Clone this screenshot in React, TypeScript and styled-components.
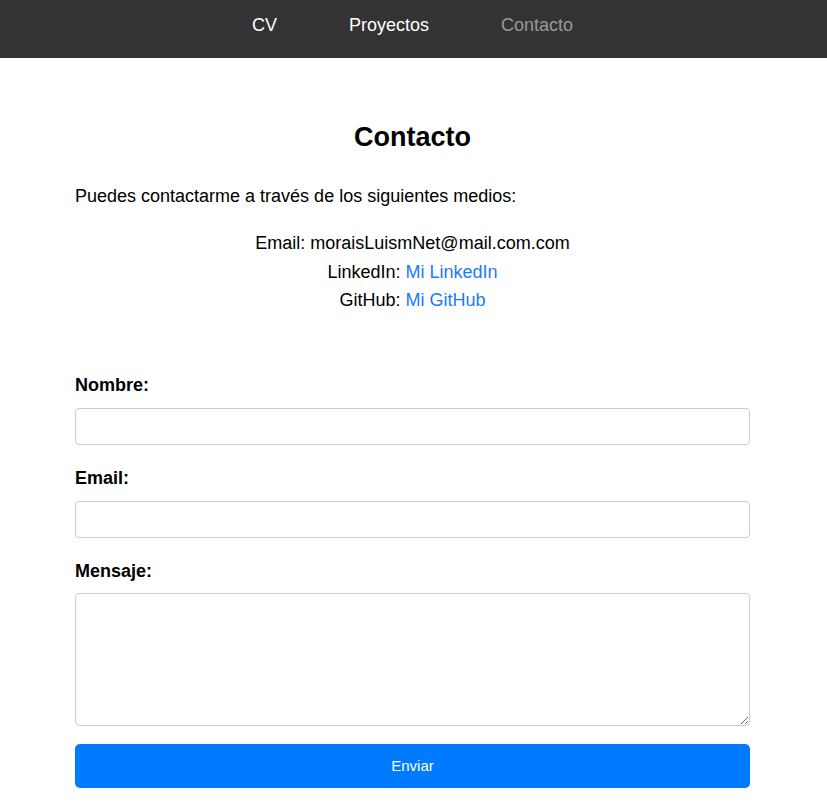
import React from "react";
import styled, { createGlobalStyle } from "styled-components";

const GlobalStyle = createGlobalStyle`
  html, body { margin: 0; padding: 0; background: #fff; }
  body { font-family: "Liberation Sans", Arial, sans-serif; color: #000; }
  * { box-sizing: border-box; }
`;

const NavBar = styled.nav`
  height: 58px;
  background: #333;
  display: flex;
  justify-content: center;
  align-items: flex-start;
  gap: 72px;
  padding: 14px 2px 0 0;
`;

const NavLink = styled.a<{ $active?: boolean }>`
  font-size: 18px;
  line-height: 22px;
  color: ${(p) => (p.$active ? "#999" : "#fff")};
  text-decoration: none;
`;

const Main = styled.main`
  max-width: 677px;
  margin: 0 auto;
  padding: 63px 2px 0 0;
`;

const Title = styled.h2`
  margin: 0;
  font-size: 27px;
  line-height: 32px;
  font-weight: bold;
  text-align: center;
`;

const Intro = styled.p`
  margin: 31px 0 0;
  font-size: 18px;
  line-height: 24px;
`;

const ContactList = styled.div`
  margin-top: 21px;
  text-align: center;
  font-size: 18px;
  line-height: 28.5px;
`;

const Link = styled.a`
  color: #1a7bff;
  text-decoration: none;
`;

const Form = styled.form`
  margin-top: 58px;
  display: flex;
  flex-direction: column;
`;

const Label = styled.label<{ $first?: boolean }>`
  display: block;
  font-size: 18px;
  line-height: 24px;
  font-weight: bold;
  margin-top: ${(p) => (p.$first ? "0" : "21px")};
  margin-bottom: 11px;
`;

const Input = styled.input`
  display: block;
  width: 100%;
  height: 37px;
  border: 1px solid #ccc;
  border-radius: 4px;
  padding: 8px;
  font-size: 16px;
  font-family: inherit;
`;

const TextArea = styled.textarea`
  display: block;
  width: 100%;
  height: 133px;
  margin-top: -1px;
  border: 1px solid #ccc;
  border-radius: 4px;
  padding: 8px;
  font-size: 16px;
  font-family: inherit;
`;

const Button = styled.button`
  margin-top: 18px;
  width: 100%;
  height: 44px;
  background: #007bff;
  color: #fff;
  border: none;
  border-radius: 5px;
  font-size: 15px;
  font-family: inherit;
  cursor: pointer;
`;

export default function App() {
  return (
    <>
      <GlobalStyle />
      <NavBar>
        <NavLink href="#">CV</NavLink>
        <NavLink href="#">Proyectos</NavLink>
        <NavLink href="#" $active>
          Contacto
        </NavLink>
      </NavBar>
      <Main>
        <Title>Contacto</Title>
        <Intro>Puedes contactarme a través de los siguientes medios:</Intro>
        <ContactList>
          <div>Email: moraisLuismNet@mail.com.com</div>
          <div>
            LinkedIn: <Link href="#">Mi LinkedIn</Link>
          </div>
          <div>
            GitHub: <Link href="#">Mi GitHub</Link>
          </div>
        </ContactList>
        <Form onSubmit={(e) => e.preventDefault()}>
          <Label $first htmlFor="nombre">Nombre:</Label>
          <Input id="nombre" type="text" />
          <Label htmlFor="email">Email:</Label>
          <Input id="email" type="email" />
          <Label htmlFor="mensaje">Mensaje:</Label>
          <TextArea id="mensaje" />
          <Button type="submit">Enviar</Button>
        </Form>
      </Main>
    </>
  );
}
